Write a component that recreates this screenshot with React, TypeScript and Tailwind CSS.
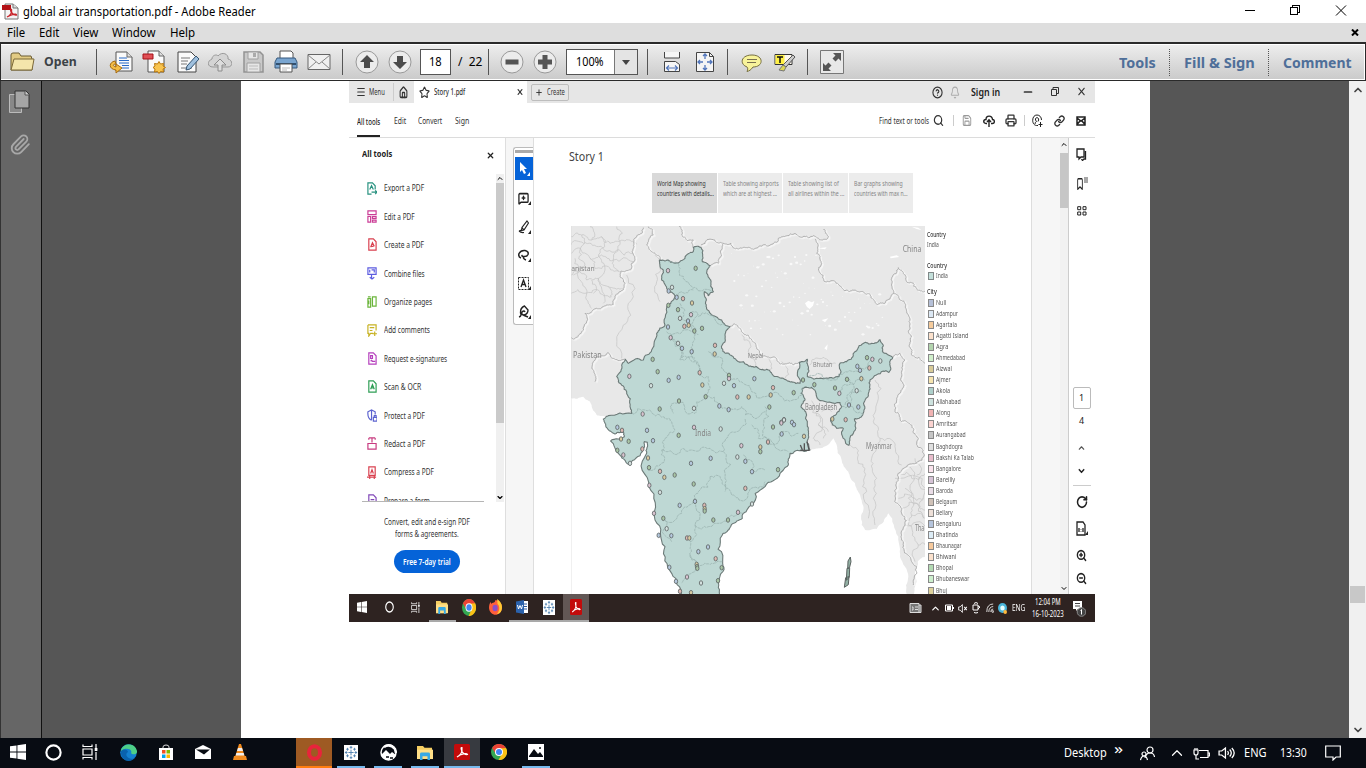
import { useLayoutEffect, useRef, useState } from 'react';
import type { ReactNode } from 'react';
import {
  Menu, House, Star, X, Plus, HelpCircle, Bell, Minus, Search, Save, Printer, Link,
  Bookmark, RotateCw, ZoomIn, ZoomOut, ChevronUp, ChevronDown, MessageSquarePlus,
  Paperclip,
} from 'lucide-react';

/* Single-line text squeezed or stretched to an exact width. */
function Fit({ w, className = '', children }: { w: number; className?: string; children: ReactNode }) {
  const ref = useRef<HTMLSpanElement>(null);
  const [s, setS] = useState(1);
  useLayoutEffect(() => {
    if (ref.current && ref.current.offsetWidth) setS(w / ref.current.offsetWidth);
  }, [w]);
  return (
    <span className={'block shrink-0 whitespace-nowrap ' + className} style={{ width: w }}>
      <span ref={ref} className="inline-block origin-left" style={{ transform: `scaleX(${s})` }}>{children}</span>
    </span>
  );
}

const none = { preserveAspectRatio: 'none' as const };

/* ---------- outer window ---------- */

function TitleBar() {
  return (
    <div className="flex h-[23px] items-center bg-white pl-[2px] text-[12px] text-black">
      <svg className="h-[17px] w-[17px]" viewBox="0 0 17 17">
        <path d="M3 1h8l5 4v11H3z" fill="#f4f4f4" stroke="#777" />
        <path d="M11 1v4h5" fill="#ddd" stroke="#777" />
        <path d="M0 2h9v5H0z" fill="#b31217" />
        <path d="M5 14c4-2 5-5 4.500-7.500c-1-1-1.500 1 0 3c1.500 2 3 3 5 2.500c0-1.500-5-1-9.500 2" fill="none" stroke="#c8262c" strokeWidth="1.300" />
      </svg>
      <Fit w={233} className="ml-[4px]">global air transportation.pdf - Adobe Reader</Fit>
      <svg className="mb-[3px] ml-auto mr-[18px] h-[12px] w-[103px]" viewBox="0 0 103 12" fill="none" stroke="#000">
        <path d="M0 6.500h10M45.500 3.500h7v7h-7zM47.500 3.500v-2h7v7h-2" shapeRendering="crispEdges" />
        <path d="M91 1.500l10 10M101 1.500l-10 10" />
      </svg>
    </div>
  );
}

function MenuBar() {
  return (
    <div className="flex h-[19px] items-center bg-[#dedede] pl-[7px] text-[12px] text-black">
      <Fit w={18}>File</Fit>
      <Fit w={20} className="ml-[14px]">Edit</Fit>
      <Fit w={25} className="ml-[14px]">View</Fit>
      <Fit w={44} className="ml-[14px]">Window</Fit>
      <Fit w={25} className="ml-[14px]">Help</Fit>
      <svg className="ml-auto mr-[7px] h-[7px] w-[8px]" viewBox="0 0 8 7"><path d="M1 .5l6 6M7 .5l-6 6" stroke="#000" strokeWidth="2" /></svg>
    </div>
  );
}

function Ico({ children, w = 'w-[33px]' }: { children: ReactNode; w?: string }) {
  return (
    <div className={'flex shrink-0 justify-center ' + w}>
      <svg className="h-[24px] w-[24px] shrink-0" viewBox="0 0 24 24" fill="none">{children}</svg>
    </div>
  );
}
const Sep = ({ className = '' }: { className?: string }) => <div className={'h-[26px] w-px shrink-0 bg-[#555] ' + className} />;
const Dotted = ({ className = '' }: { className?: string }) => <div className={'h-[27px] w-0 shrink-0 border-l border-dotted border-[#555] ' + className} />;
const Round = <circle cx="12" cy="12" r="11" fill="#ececec" stroke="#999" />;

function Toolbar() {
  return (
    <div className="flex h-[39px] items-center border-b border-l border-r border-t-2 border-[#2a2a2a] bg-linear-to-b from-[#eeeeee] to-[#cacaca]">
      <div className="flex h-[36px] w-full items-center border-y border-r border-white">
        <svg className="ml-[9px] h-[20px] w-[25px]" viewBox="0 0 25 20">
          <path d="M1 18V3q0-2 2-2h6l2 3h10l1 3v11z" fill="#e2cb84" stroke="#6b5c32" />
          <path d="M1 18L4 7h20l-2 11z" fill="#f4e5ab" stroke="#7b6838" />
        </svg>
        <Fit w={33} className="ml-[9px] text-[13px] font-bold text-[#3c4247]">Open</Fit>
        <Sep className="ml-[19px] mr-[7px]" />
        <Ico>
          <path d="M7 2h11l5 5v14H7z" fill="#fafafa" stroke="#555" /><path d="M18 2v5h5" fill="#ddd" stroke="#666" />
          <path d="M10 8h8M10 10.500h10M10 13h10M13 15.500h7M13 18h7" stroke="#2769c6" />
          <path d="M6 11c-6 1-7 8 1 9v3l6-5-6-4v3c-4-1-3-3 0-3z" fill="#f3bd45" stroke="#a66b10" />
        </Ico>
        <Ico>
          <path d="M6 1h11l5 5v16H6z" fill="#fafafa" stroke="#555" /><path d="M17 1v5h5" fill="#ddd" stroke="#666" />
          <path d="M1 4h10v5H1z" fill="#e04f55" stroke="#a5121b" />
          <path d="M17 11.500l1.500 2.500 3-.5-.5 2.500 2.500 1.500-2.500 1.500.5 3-3-.5-1.500 2-1.500-2-3 .500.500-3-2-1.500 2-1.500-.5-2.500 3 .5z" fill="#f8c44f" stroke="#b9770c" />
        </Ico>
        <Ico>
          <path d="M3 2h13l5 5v15H3z" fill="#fafafa" stroke="#444" /><path d="M6 8h9M6 11h7M6 14h6M6 18h11" stroke="#777" />
          <path d="M21 6l3 3-9 10-4 1 1-4z" fill="#9fc0de" stroke="#345472" />
        </Ico>
        <Ico>
          <path d="M5 17c-6 0-6-6-1-8 0-4 5-5 6-3 4-5 11-2 10 3 5 1 5 8 0 8z" fill="#d4d4d4" stroke="#999" />
          <path d="M12 9l6 6h-4v6h-4v-6H6z" fill="#ddd" stroke="#8c8c8c" />
        </Ico>
        <Ico>
          <path d="M3 2h16l3 3v17H3z" fill="#c9c9c9" stroke="#929292" strokeWidth="1.500" />
          <path d="M7 2h10v7H7zM6 13h13v9H6z" fill="#e6e6e6" stroke="#a0a0a0" /><path d="M12 3h3v4h-3z" fill="#aaa" />
          <path d="M8 16h9M8 19h9" stroke="#bbb" />
        </Ico>
        <Ico>
          <path d="M6 9V1h11l2 2v6" fill="#fff" stroke="#555" />
          <path d="M3 8h18l2 4v6H1v-6z" fill="#79a5d0" stroke="#36597c" /><path d="M2 13h20v2H2z" fill="#31506f" />
          <path d="M6 14h12v8H6z" fill="#fff" stroke="#555" /><path d="M8 18h8M8 20h5" stroke="#bbb" />
        </Ico>
        <Ico>
          <path d="M1 4.500h22v15H1z" fill="#f0f0f0" stroke="#666" /><path d="M1 5l11 9L23 5M1 19l8-7M23 19l-8-7" stroke="#888" />
        </Ico>
        <Sep className="ml-[7px] mr-[7px]" />
        <Ico>{Round}<path d="M12 5l7 7h-4v6H9v-6H5z" fill="#4c4c4c" /></Ico>
        <Ico>{Round}<path d="M12 19l7-7h-4V6H9v6H5z" fill="#4c4c4c" /></Ico>
        <div className="ml-[4px] flex h-[26px] w-[31px] shrink-0 items-center justify-center border border-[#555] bg-white text-[12px]"><Fit w={13}>18</Fit></div>
        <Fit w={24} className="ml-[7px] text-[12px]">/&nbsp; 22</Fit>
        <Sep className="ml-[6px] mr-[6px]" />
        <Ico>{Round}<path d="M5.500 9.500h13v5h-13z" fill="#555" /></Ico>
        <Ico>{Round}<path d="M9.500 5h5v4.500H19v5h-4.500V19h-5v-4.500H5v-5h4.500z" fill="#555" /></Ico>
        <div className="ml-[5px] flex h-[26px] w-[72px] shrink-0 items-center border border-[#555] bg-white text-[12px]">
          <Fit w={28} className="ml-[9px] mr-[10px]">100%</Fit>
          <div className="flex h-full flex-1 items-center justify-center border-l border-[#777] bg-[#e4e4e4]">
            <svg className="h-[5px] w-[8px]" viewBox="0 0 8 5"><path d="M0 0h8L4 5z" fill="#444" /></svg>
          </div>
        </div>
        <Sep className="ml-[9px] mr-[7px]" />
        <Ico>
          <path d="M4.500 2v6h15V2" fill="#f5f5f5" stroke="#444" /><path d="M4.500 11.500h11l4 3v7h-15z" fill="#f5f5f5" stroke="#444" />
          <path d="M6 18h12M9 15.500L6.500 18 9 20.500M15 15.500l2.500 2.500-2.500 2.500" stroke="#5276bb" strokeWidth="1.200" />
        </Ico>
        <Ico>
          <path d="M3.500 2.500h13l4 4v15h-17z" fill="#f5f5f5" stroke="#444" /><path d="M16.500 2.500v4h4" stroke="#444" />
          <path d="M12 4v5M12 15v5M5 12h5M14 12h5M10 6l2-2 2 2M10 18l2 2 2-2M7 10l-2 2 2 2M17 10l2 2-2 2" stroke="#5276bb" strokeWidth="1.300" />
        </Ico>
        <Sep className="ml-[6px] mr-[7px]" />
        <Ico>
          <path d="M12 5c12 0 12 12 1 12-2 3-4 4-6 4.500 1-2 1-3.500 0-4.500-8-3-6-12 5-12z" fill="#f8f39a" stroke="#766e40" /><path d="M7 9.500h10M7 12.500h9" stroke="#796f50" />
        </Ico>
        <Ico>
          <path d="M2 4.500h17v10H2z" fill="#fffaf0" stroke="#333" /><path d="M2.500 5h9v9h-9z" fill="#fff045" /><path d="M4 7h6M7 7v6" stroke="#111" strokeWidth="1.500" />
          <path d="M20 5l2 2-9 10-3-2z" fill="#ccc" stroke="#555" /><path d="M10 15l3 2-2 4-5-1z" fill="#dbd655" stroke="#777" />
        </Ico>
        <Sep className="ml-[6px] mr-[7px]" />
        <Ico>
          <path d="M.5.5h23v23H.5z" fill="#e8e8e8" stroke="#777" /><path d="M21 3v8l-2.500-2.500-3 3-3-3 3-3L13 3zM3 21v-8l2.500 2.500 3-3 3 3-3 3L11 21z" fill="#555" />
        </Ico>
        <div className="ml-auto flex items-center text-[14px] font-bold text-[#4f6f99]">
          <Fit w={37}>Tools</Fit><Dotted className="ml-[13px] mr-[14px]" />
          <Fit w={71}>Fill &amp; Sign</Fit><Dotted className="ml-[13px] mr-[14px]" />
          <Fit w={69} className="mr-[12px]">Comment</Fit>
        </div>
      </div>
    </div>
  );
}

/* ---------- embedded reader ---------- */

function ReaderTabs() {
  return (
    <div className="flex h-[22px] items-center bg-[#e6e6e6] text-[8px] text-[#333]">
      <Menu {...none} className="ml-[7px] h-[12px] w-[10px]" strokeWidth={2.2} />
      <Fit w={16} className="ml-[3px]">Menu</Fit>
      <div className="ml-[8px] h-[18px] w-px bg-[#ccc]" />
      <House {...none} className="ml-[5px] h-[13px] w-[9px]" strokeWidth={2.8} />
      <div className="ml-[6px] flex h-full w-[113px] items-center bg-white">
        <Star {...none} className="ml-[5px] h-[13px] w-[11px]" strokeWidth={2.2} />
        <Fit w={31} className="ml-[4px] text-[9.5px] font-medium">Story 1.pdf</Fit>
        <X {...none} className="ml-[51px] h-[10px] w-[8px]" strokeWidth={2.6} />
      </div>
      <div className="ml-[4px] flex h-[17px] w-[38px] items-center rounded-[2px] border border-[#bdbdbd]">
        <Plus {...none} className="ml-[3px] h-[9px] w-[8px]" strokeWidth={2.6} />
        <Fit w={18} className="ml-[4px]">Create</Fit>
      </div>
      <HelpCircle {...none} className="ml-auto h-[13px] w-[11px]" strokeWidth={2.4} />
      <Bell {...none} className="ml-[7px] h-[13px] w-[10px] text-[#aaa]" strokeWidth={2} />
      <Fit w={29} className="ml-[11px] text-[11px] font-semibold text-[#222]">Sign in</Fit>
      <Minus {...none} className="ml-[22px] h-[12px] w-[12px]" strokeWidth={3.4} />
      <svg className="mb-[2px] ml-[17px] h-[9px] w-[8px]" viewBox="0 0 8 9" fill="none" stroke="#333"><path d="M.5 2.500h5v6h-5zM2 2V.5h5.500v6H6" /></svg>
      <X {...none} className="mb-[2px] ml-[17px] mr-[8px] h-[13px] w-[11px]" strokeWidth={2} />
    </div>
  );
}

function ReaderMenu() {
  return (
    <div className="flex h-[35px] items-center border-b border-[#dcdcdc] pt-px text-[9px] text-[#333]">
      <div className="ml-[8px] flex h-full w-[23px] flex-col justify-end">
        <Fit w={23} className="mb-[7px] h-[12px] font-medium leading-[12px] text-[#222]">All tools</Fit>
        <div className="h-[2px] w-full bg-[#222]" />
      </div>
      <Fit w={12} className="ml-[14px]">Edit</Fit>
      <Fit w={24} className="ml-[12px]">Convert</Fit>
      <Fit w={14} className="ml-[13px]">Sign</Fit>
      <Fit w={50} className="ml-auto">Find text or tools</Fit>
      <Search {...none} className="ml-[4px] h-[13px] w-[11px]" strokeWidth={2.6} />
      <div className="ml-[9px] h-[11px] w-px bg-[#ccc]" />
      <Save {...none} className="ml-[8px] h-[13px] w-[10px] text-[#999]" strokeWidth={2.2} />
      <svg {...none} className="ml-[11px] h-[13px] w-[12px]" viewBox="0 0 12 13" fill="none" stroke="#222" strokeWidth="1.400"><path d="M4 9.500H3C0 9.500 0 5.500 3 5.500 3 1 9 1 9.500 5.500c2.500 0 2.500 4 0 4H8M6 13V6M4 8l2-2.300L8 8" /></svg>
      <Printer {...none} className="ml-[10px] h-[13px] w-[12px]" strokeWidth={2.6} />
      <div className="ml-[7px] h-[11px] w-px bg-[#ccc]" />
      <svg {...none} className="ml-[7px] h-[13px] w-[11px]" viewBox="0 0 11 13" fill="none" stroke="#222"><path d="M6 11.500C2 12 .7 9 .7 6.300.7 3 2.500 1 5 1s4.500 2 4.500 5M3 10q0-2 1.500-2.500Q3 6 3.500 4.500 5 2.500 6.500 4.500 7 6 6 7.500M8.500 8v5M6.500 10.500h4" /></svg>
      <Link {...none} className="ml-[11px] h-[12px] w-[11px]" strokeWidth={2.8} />
      <svg {...none} className="ml-[11px] mr-[9px] h-[10px] w-[10px]" viewBox="0 0 10 10" fill="none" stroke="#222" strokeWidth="1.500"><path d="M1 1h8v8H1zM1 2l4 3 4-3M1 8.500L4 5M9 8.500L6 5" /></svg>
    </div>
  );
}

const page = 'M2 1h5l3 3v9H2z';
const tools: { t: string; w: number; c: string; d: string }[] = [
  { t: 'Export a PDF', w: 40, c: 'text-[#27917f]', d: 'M5 13H1V1h5l3 3v4M3 8l2-4 2 4M5 11h6M9 9l2 2-2 2' },
  { t: 'Edit a PDF', w: 31, c: 'text-[#cb3d96]', d: 'M1 1h9v4H1zM1 7h3v6H1zM6 7h4v2H6zM6 11h4v2H6z' },
  { t: 'Create a PDF', w: 40, c: 'text-[#d9404f]', d: page + 'M4 10l2-5 2 4M4 9h3' },
  { t: 'Combine files', w: 41, c: 'text-[#5c5ce0]', d: 'M1 1h9v7H1zM3 3v3M5 3h3v3M5 8v5M3 11l2.500 2L8 11' },
  { t: 'Organize pages', w: 48, c: 'text-[#6bb53b]', d: 'M6 2h4v10H6zM1 4h3v9H1zM1 2h3M2 6v4' },
  { t: 'Add comments', w: 46, c: 'text-[#c7b222]', d: 'M1 1h9v6M7 10H4l-2 3V10H1V1M3 4h5M3 7h3M8.500 8v5M6 10.500h5' },
  { t: 'Request e-signatures', w: 63, c: 'text-[#b540bd]', d: page + 'M4 4h2v3H4zM4 10l1-1 1 1h3' },
  { t: 'Scan & OCR', w: 37, c: 'text-[#2f9e55]', d: page + 'M4 10l2-5 2 5M4.500 8.500h3' },
  { t: 'Protect a PDF', w: 41, c: 'text-[#5c63cf]', d: 'M5 12C0 10 1 5 1 3l4-2 4 2v3M5 1v11M7 9h4v4H7zM8 9V7h2v2' },
  { t: 'Redact a PDF', w: 41, c: 'text-[#c83b80]', d: 'M1 7h9v6H1zM2 1h7M5.500 1v5M2 1v2M9 1v2' },
  { t: 'Compress a PDF', w: 50, c: 'text-[#d9404f]', d: 'M2 1h7v9H2zM4 8l1.500-4L7 8M0 12h10M3 10v4M8 10v4' },
  { t: 'Prepare a form', w: 46, c: 'text-[#8148b8]', d: page + 'M4 6h4M4 9h4' },
];

function ToolsPanel() {
  return (
    <div className="flex w-[156px] shrink-0 flex-col bg-white">
      <div className="mb-[4px] flex h-[32px] shrink-0 items-center pl-[13px]">
        <Fit w={30} className="text-[9.5px] font-bold text-[#222]">All tools</Fit>
        <X {...none} className="ml-[94px] mt-[3px] h-[9px] w-[9px] text-[#222]" strokeWidth={3.2} />
      </div>
      <div className="flex h-[328px] shrink-0">
        <div className="h-[328px] w-[135px] pl-[13px]">
          <div className="h-full overflow-hidden border-b border-[#b5b5b5]">
            {tools.map((t) => (
              <div key={t.t} className="flex h-[28.400px] items-center pl-[5px] text-[9px] text-[#333]">
                <svg {...none} viewBox="0 0 11 14" className={'h-[13px] w-[10px] shrink-0 ' + t.c} fill="none" stroke="currentColor" strokeWidth="1.300"><path d={t.d} /></svg>
                <Fit w={t.w} className="ml-[7px]">{t.t}</Fit>
              </div>
            ))}
          </div>
        </div>
        <div className="ml-[12px] flex w-[8px] flex-col items-center justify-between bg-[#f0f0f0]">
          <ChevronUp className="h-[9px] w-[8px]" strokeWidth={3} />
          <div className="mb-auto h-[240px] w-full bg-[#cacaca]" />
          <ChevronDown className="h-[9px] w-[8px]" strokeWidth={3.5} />
        </div>
      </div>
      <div className="flex flex-col items-center pt-[14px] text-[9px] leading-[12px] text-[#333]">
        <Fit w={86}>Convert, edit and e-sign PDF</Fit>
        <Fit w={64}>forms &amp; agreements.</Fit>
        <div className="mt-[10px] flex h-[23px] w-[66px] items-center justify-center rounded-full bg-[#0563d8] text-white"><Fit w={48} className="font-semibold">Free 7-day trial</Fit></div>
      </div>
    </div>
  );
}

const Corner = () => <svg className="-ml-px mt-[10px] h-[4px] w-[3px] shrink-0" viewBox="0 0 3 4"><path d="M3 0v4H0z" fill="currentColor" /></svg>;

function QuickTools() {
  const row = 'flex h-[28.400px] w-full shrink-0 items-center justify-center text-[#222]';
  return (
    <div className="flex w-[29px] shrink-0 justify-end border-x border-[#dedede] bg-[#f6f6f6] pt-[9px]">
      <div className="flex h-[178px] w-[20px] flex-col items-center rounded-l-[3px] border border-r-0 border-[#bbb] bg-white pl-px pt-[2px]">
        <div className="h-[3px] w-full shrink-0 bg-[#aaa]" />
        <div className="mt-[4px] flex h-[23px] w-full shrink-0 items-center justify-center bg-[#0563d8] text-white">
          <svg className="h-[13px] w-[9px]" viewBox="0 0 9 13"><path d="M1 0v10l2-2 2 4 2-1-2-4h3z" fill="#fff" /></svg><Corner />
        </div>
        <div className={row + ' mt-[4px]'}><MessageSquarePlus {...none} className="h-[13px] w-[11px]" strokeWidth={2.8} /><Corner /></div>
        <div className={row}>
          <svg {...none} className="h-[14px] w-[11px]" viewBox="0 0 11 14" fill="none" stroke="currentColor" strokeWidth="1.200"><path d="M9 1l1.500 2L6 10l-2.500.5.5-3zM4 7.500L6 10M1 11q2 2 5 1.500M3.500 10L1 11" /></svg><Corner />
        </div>
        <div className={row}>
          <svg {...none} className="h-[12px] w-[11px]" viewBox="0 0 11 12" fill="none" stroke="currentColor" strokeWidth="1.500"><path d="M3 9Q0 8 1 4.500 3 1 7 1.500q4 1 3 4Q9 8 5 7.500 3 7 4.500 6M5.500 7.500Q5 10 8 11" /></svg><Corner />
        </div>
        <div className={row}>
          <svg className="h-[13px] w-[11px]" viewBox="0 0 11 13" fill="none" stroke="currentColor"><path d="M.5.5h10v12H.5z" strokeDasharray="2 1" /><path d="M3 10l2.500-7L8 10M4 7.500h3" strokeWidth="1.300" /></svg><Corner />
        </div>
        <div className={row}>
          <svg {...none} className="h-[14px] w-[11px]" viewBox="0 0 11 14" fill="none" stroke="currentColor" strokeWidth="1.400"><path d="M1 12q3-1 1.500-4Q2 3 6.500 1L10 5q0 4-4 5-3 0-2-3 2-2 3 0M5 10l5 2" /></svg><Corner />
        </div>
      </div>
    </div>
  );
}

/* ---------- map ---------- */

type P = [number, number];
const parse = (s: string): P[] => s.trim().split(/\s+/).map((p) => p.split(',').map(Number) as P);
/* Deterministic midpoint displacement, gives borders a natural ragged edge. */
function rough(s: string, amp = 0.16, closed = false, depth = 3) {
  let seed = 7 + s.length * 131;
  const rnd = () => { seed = (seed * 16807) % 2147483647; return seed / 2147483647 - 0.5; };
  let pts = parse(s);
  if (closed) pts.push(pts[0]);
  for (let k = 0; k < depth; k++) {
    const out: P[] = [pts[0]];
    for (let i = 1; i < pts.length; i++) {
      const [a, b] = pts[i - 1], [c, d] = pts[i];
      const r = rnd() * 2 * amp;
      out.push([(a + c) / 2 - (d - b) * r, (b + d) / 2 + (c - a) * r], [c, d]);
    }
    pts = out;
  }
  return 'M' + pts.map((p) => p[0].toFixed(1) + ' ' + p[1].toFixed(1)).join('L') + (closed ? 'Z' : '');
}

const india = '385,68 408,67 412,110 436,122 425,145 437,165 445,200 430,212 418,200 424,240 436,265 470,285 495,305 480,330 470,370 482,385 500,392 535,410 560,425 585,433 605,433 625,452 655,460 680,470 705,475 703,412 727,403 730,425 727,455 745,462 785,459 822,455 825,415 850,405 870,380 902,352 920,355 945,344 955,362 952,378 983,398 975,415 972,442 955,438 915,465 912,500 898,530 893,570 868,582 865,625 852,660 842,655 835,610 815,610 802,600 797,580 812,570 830,545 825,533 765,527 755,515 752,500 740,487 712,490 708,505 720,525 708,545 722,560 727,600 730,630 735,675 712,677 675,685 670,720 645,745 600,785 560,840 535,865 532,880 500,898 490,915 472,930 473,1015 463,1060 463,1115 348,1115 320,1045 300,965 270,885 252,785 245,685 247,652 238,650 232,680 195,718 160,685 137,648 150,642 178,635 176,622 150,627 122,600 115,582 130,572 200,565 195,545 185,500 160,470 155,455 170,420 182,403 190,415 235,405 260,375 275,325 300,300 312,240 330,217 305,190 290,165 295,135 285,120 283,105 310,105 325,113 360,100 385,80';
const land = '-300,-400 1500,-400 1500,1000 1080,995 1058,1010 1050,1040 1055,1070 1045,1110 1025,1107 1030,1055 1005,995 1000,935 970,865 960,880 935,912 900,915 890,900 895,855 885,810 870,775 850,740 830,705 815,660 805,640 765,670 735,677 600,600 300,500 200,560 115,573 95,570 75,530 55,515 18,520 -300,520';

const majorBorders = [
  '235,8 215,35 205,70 210,105 195,135 170,138 180,175 160,205 145,238 125,240 95,250 60,265 50,320 18,338',
  '250,5 265,30 245,60 270,85 285,105',
  '342,3 350,30 385,45 385,68', '408,60 450,45 475,55 470,90 460,115 436,122',
  '475,55 515,70 540,68 560,72 600,58 640,40 690,25 745,32 770,45 790,35 775,12',
  '750,42 755,85 760,135 780,170 830,188 880,200 915,208 935,238 975,222 985,205 980,160 1000,128 1015,145 1025,170 1055,190 1080,198',
  '985,205 1005,225 1025,260 1030,320 1033,365 1040,390 1080,415', '983,398 1005,385 1020,405 1018,480 995,520 990,560 1010,590 1040,600 1060,640 1078,690 1025,725 1000,745 990,800 1010,850 1020,900 1015,950 1040,1010 1045,1080',
  '495,305 515,300 535,325 560,345 575,370 605,395 640,410 670,415 703,412',
  '182,403 130,383 95,395 80,430 90,470',
];
const outerMinor = [
  '18,35 50,30 75,45 110,35 135,55 180,48 215,58', '18,85 48,75 75,100 110,90 145,105 205,110', '18,150 45,140 65,165 100,160 130,185 170,190',
  '50,30 45,75 60,120 40,160 65,205 80,250', '110,35 100,90 120,135 105,180 115,235', '155,5 165,50 145,105 160,140', '18,205 60,205 100,195 140,215',
  '18,60 55,55 100,65 155,75 205,85', '75,5 80,45', '75,100 90,130 130,125 170,138', '30,100 25,150', '80,165 85,205', '130,185 135,215',
  '185,150 190,235 175,300 170,400', '270,85 285,130 275,170 285,230',
  '425,300 430,310', '530,330 550,380 570,430', '605,395 610,440', '650,410 660,460',
  '735,420 760,400 790,408 812,415', '750,560 760,600 790,620', '740,527 745,640 765,660', '770,560 800,560', '760,600 775,640',
  '930,465 940,520 925,590 945,640 920,700 935,760 925,820 930,900', '850,660 880,690 900,730 905,800 910,880', '945,640 990,665 1010,720', '1000,745 1040,760 1080,745', '1010,850 1060,840 1080,855', '1020,790 1040,850 1030,900 1060,960 1050,1010', '1060,760 1065,830 1080,880', '990,760 1080,790', '1020,900 1080,915', '1060,960 1080,960', '1025,725 1035,790 1030,820 1060,840', '1050,700 1055,750', '1000,820 1040,815 1075,820', '1040,870 1075,880',
];
const states = [
  '310,110 345,130 360,165 395,190 440,198', '330,217 360,205 385,195', '345,235 350,280 380,310 400,330', '305,320 320,340 345,360 350,400 390,410 400,440 430,455 435,490 425,515 395,530 390,565 360,555 345,530 315,545 325,565',
  '380,260 400,270 390,330 385,380 405,440', '400,275 430,268 450,285 480,300', '430,380 470,430 495,460 535,475 560,500 600,515 650,515 700,520 712,490',
  '425,515 460,535 490,555 530,545 540,570 600,560', '600,545 595,600 610,660 640,650 660,620 700,625', '322,345 345,405 390,400', '200,565 240,555 285,570 310,580 330,615 300,640 290,675 340,685 380,675 435,670 475,680 490,630 525,615 540,580',
  '475,680 480,760 500,810 540,825 580,790 600,770', '290,675 285,720 250,735', '435,755 400,800 385,830 350,865 300,885 320,950', '435,755 470,765 480,800', '385,830 390,900 430,905 500,870 535,865',
  '390,900 375,950 375,990 400,1020 440,1015 473,1010', '375,990 390,1040 350,1075', '320,345 330,325 380,320', '560,600 580,640 620,650 670,680', '535,690 560,740 600,735',
  '730,455 780,460 840,440 890,430 930,400', '825,500 850,480 900,465', '840,540 875,500 890,500', '830,545 870,560 893,570', '850,460 860,500 850,540',
];
const c = ['#a9c6a5', '#d8caa0', '#dfb8b2', '#b5c8de', '#d3e0de', '#d9c3d0'];
const dots = parse('392,130 309,137 321,187 311,198 335,217 354,221 381,234 310,241 339,254 378,269 345,280 369,288 309,306 358,304 371,301 388,318 411,310 317,338 339,355 351,370 380,380 450,361 449,387 263,403 278,440 193,454 258,482 311,466 341,457 404,443 412,480 422,515 492,451 492,461 477,475 507,482 568,461 517,516 551,516 342,528 284,552 233,567 387,550 463,543 491,554 624,488 617,510 686,503 613,546 657,584 649,592 681,592 157,607 171,616 168,642 191,649 157,676 175,690 195,715 246,616 264,647 232,672 249,699 252,728 341,631 387,607 467,612 378,715 437,700 285,739 298,757 329,750 386,777 253,781 285,802 344,841 390,829 418,841 419,851 419,858 295,880 267,865 305,911 319,932 281,931 366,939 373,939 445,885 489,885 519,862 561,837 429,966 400,980 452,1001 395,1018 396,1025 397,1030 366,1056 408,1074 313,1027 333,1069 345,1099 378,1103 470,1028 459,1067 529,662 517,696 541,709 561,740 541,790 586,666 586,680 624,606 649,594 657,585 687,599 650,627 609,651 717,634 639,734 906,398 922,403 946,408 877,424 885,436 913,429 889,461 846,463 810,489 823,505 875,497 852,540 880,546 842,584 802,582 748,479 714,465');
const specks = Array.from({ length: 120 }, (_, i) => [500 + ((i * 137) % 465), 85 + ((i * 71 + ((i * i) % 37)) % 260), 1.5 + (i % 4)]);

function MapView() {
  return (
    <svg className="h-[368px] w-[354px] shrink-0" viewBox="18 3 1062 1104" fill="none" fontFamily="Noto Sans, sans-serif">
      <path d="M18 3h1062v1104H18z" fill="#fff" />
      <path d={rough(land, 0.12, true)} fill="#e8e8e8" />
      {specks.filter(([x, y]) => y < 330 && (x > 520 || y < 260) && (x < 760 || y > 200)).map(([x, y, r], i) => <ellipse key={i} cx={x} cy={y} rx={r} ry={r * 0.8} fill="#fff" opacity="0.75" />)}
      <path d="M720 235l10-8 10 5 8-4-4 14-10 10-8-6zM770 285l20-5-10 12zM760 70l25-3-5 6zM975 95l20-4 8 5-26 4zM778 370l10-12-2 18zM1040 5l20 3 10 8-15-4z" fill="#fff" />
      <g stroke="#c3c3c3" strokeWidth="2">{outerMinor.map((b) => <path key={b} d={rough(b, 0.28)} />)}</g>
      <g stroke="#fff" strokeWidth="5" opacity=".6">{majorBorders.map((b) => <path key={b} d={rough(b, 0.22, false, 4)} transform="translate(4 3)" />)}</g>
      <g stroke="#a3a3a3" strokeWidth="2.500">{majorBorders.map((b) => <path key={b} d={rough(b, 0.22, false, 4)} />)}</g>
      <path d={rough(india, 0.18, true)} fill="#bed8d4" stroke="#6c7a78" strokeWidth="3.300" strokeLinejoin="round" />
      <g stroke="#96aeaa" strokeWidth="2" strokeDasharray="9 2">{states.map((b) => <path key={b} d={rough(b, 0.28)} />)}</g>
      <path d="M849 1008l7-12 2 14-4 16-6 6zM846 1030l8-2-1 28-9 10zM842 1058l10-3-2 24-12 8z" fill="#93b1a5" stroke="#59615f" strokeWidth="3" />
      <path d="M706 660l6 14M718 655v20M726 650l6 24M706 676h28" stroke="#555" strokeWidth="4" />
      <g stroke="#626a69" strokeWidth="2.600">
        {dots.map(([x, y], i) => <ellipse key={i} cx={x} cy={y} rx="5" ry="6.800" fill={c[(i * 5 + (i >> 2)) % 6]} />)}
      </g>
      <g fill="#858585" fontSize="24">
        <text x="19" y="137" fontSize="21" textLength="70" lengthAdjust="spacingAndGlyphs">anistan</text>
        <text x="24" y="398" fontSize="26" textLength="86" lengthAdjust="spacingAndGlyphs">Pakistan</text>
        <text x="548" y="398" fontSize="23" textLength="47" lengthAdjust="spacingAndGlyphs">Nepal</text>
        <text x="744" y="427" fontSize="23" textLength="58" lengthAdjust="spacingAndGlyphs">Bhutan</text>
        <text x="720" y="554" textLength="96" lengthAdjust="spacingAndGlyphs">Bangladesh</text>
        <text x="1013" y="82" fontSize="29" textLength="56" lengthAdjust="spacingAndGlyphs">China</text>
        <text x="390" y="632" fontSize="26" textLength="48" lengthAdjust="spacingAndGlyphs">India</text>
        <text x="903" y="671" fontSize="26" textLength="78" lengthAdjust="spacingAndGlyphs">Myanmar</text>
        <text x="1050" y="918" textLength="28" lengthAdjust="spacingAndGlyphs">Tha</text>
      </g>
      <path d="M18.500 3v1104" stroke="#ddd" strokeWidth="2" />
    </svg>
  );
}

const cities: [string, number, string][] = [
  ['Null', 10, 'bg-[#b5c0d8]'], ['Adampur', 22, 'bg-[#dce8f4]'], ['Agartala', 21, 'bg-[#f5cb9c]'], ['Agatti Island', 32, 'bg-[#fbe1cc]'],
  ['Agra', 12, 'bg-[#b3d4ae]'], ['Ahmedabad', 29, 'bg-[#d0efcb]'], ['Aizwal', 16, 'bg-[#d8cb98]'], ['Ajmer', 15, 'bg-[#f7e5b0]'],
  ['Akola', 14, 'bg-[#aed0cb]'], ['Allahabad', 25, 'bg-[#cde2de]'], ['Along', 14, 'bg-[#f1b3b3]'], ['Amritsar', 21, 'bg-[#fbd3d0]'],
  ['Aurangabad', 30, 'bg-[#c6c6c6]'], ['Baghdogra', 27, 'bg-[#e0e0e0]'], ['Bakshi Ka Talab', 38, 'bg-[#e8bccb]'], ['Bangalore', 25, 'bg-[#fae3ec]'],
  ['Bareilly', 19, 'bg-[#d6c3d6]'], ['Baroda', 17, 'bg-[#eadde7]'], ['Belgaum', 21, 'bg-[#d0c2b8]'], ['Bellary', 17, 'bg-[#eee0d8]'],
  ['Bengaluru', 25, 'bg-[#b5c4dc]'], ['Bhatinda', 22, 'bg-[#dcecf6]'], ['Bhaunagar', 26, 'bg-[#f6c99c]'], ['Bhiwani', 20, 'bg-[#fbe1cc]'],
  ['Bhopal', 17, 'bg-[#b3dab3]'], ['Bhubaneswar', 33, 'bg-[#cdefcd]'], ['Bhuj', 11, 'bg-[#dfd29c]'],
];

function Legend() {
  return (
    <div className="h-[368px] w-[60px] overflow-hidden pl-[2px] pt-[4px] text-[7px] leading-[10px] text-[#555]">
      <Fit w={19} className="font-medium text-[#333]">Country</Fit>
      <Fit w={12}>India</Fit>
      <Fit w={20} className="mt-[11px] font-medium text-[#333]">Country</Fit>
      <div className="flex h-[10px] items-center"><div className="ml-px h-[8px] w-[6px] border border-[#808888] bg-[#c3dfda]" /><Fit w={12} className="ml-[2px]">India</Fit></div>
      <Fit w={10} className="mt-[6px] font-medium text-[#333]">City</Fit>
      {cities.map(([n, w, col]) => (
        <div key={n} className="flex h-[11.080px] items-center">
          <div className={'ml-px h-[8px] w-[6px] shrink-0 border border-[#888] ' + col} />
          <Fit w={w} className="ml-[2px]">{n}</Fit>
        </div>
      ))}
    </div>
  );
}

const story: [string, number, string, number][] = [
  ['World Map showing', 49, 'countries with details...', 57], ['Table showing airports', 56, 'which are at highest ...', 54],
  ['Table showing list of', 51, 'all airlines within the ...', 56], ['Bar graphs showing', 49, 'countries with max n...', 54],
];

function Sheet() {
  return (
    <div className="h-[456px] w-[497px] shrink-0 bg-white">
      <div className="flex h-[35px] items-center pl-[35px] pt-[4px]"><Fit w={35} className="text-[12.500px] text-[#444]">Story 1</Fit></div>
      <div className="ml-[118px] flex h-[40px] gap-px">
        {story.map(([a, aw, b, bw], i) => (
          <div key={a} className={'w-[64.500px] pl-[5px] pt-[6px] text-[7px] leading-[10px] ' + (i ? 'bg-[#ececec] text-[#848484]' : 'bg-[#d9d9d9] text-[#333]')}>
            <Fit w={aw}>{a}</Fit><Fit w={bw}>{b}</Fit>
          </div>
        ))}
      </div>
      <div className="flex pl-[37px] pt-[13px]"><MapView /><Legend /></div>
    </div>
  );
}

function RightRail() {
  const k = { ...none, strokeWidth: 2.6 };
  return (
    <div className="flex w-[26px] shrink-0 flex-col items-center bg-white pr-px text-[9px] text-[#222]">
      <svg {...none} className="mt-[10px] h-[13px] w-[11px]" viewBox="0 0 11 13" fill="none" stroke="#222" strokeWidth="1.300"><path d="M1 1h7v8H5L3 11V9H1zM9.500 3v8H8l-1.500 1.500L5.500 11" /></svg>
      <div className="mt-[16px] flex"><Bookmark {...k} className="h-[14px] w-[8px]" /><svg className="h-[6px] w-[4px]" viewBox="0 0 4 6" stroke="#222"><path d="M0 1h4M0 3h4M0 5h4" strokeWidth=".8" /></svg></div>
      <svg className="mt-[15px] h-[10px] w-[10px]" viewBox="0 0 10 10" fill="none" stroke="#222"><path d="M.7.700h3v3h-3zM6 .7h3v3H6zM.7 6h3v3h-3zM6 6h3v3H6z" /></svg>
      <div className="mt-[171px] flex h-[22px] w-[18px] shrink-0 items-center justify-center rounded-[2px] border border-[#bbb]">1</div>
      <div className="mt-[5px] h-[13px] leading-[13px]">4</div>
      <ChevronUp {...none} className="mt-[16px] h-[10px] w-[9px] text-[#555]" strokeWidth={2.8} />
      <ChevronDown {...none} className="mt-[13px] h-[10px] w-[9px]" strokeWidth={4} />
      <div className="mt-[9px] h-px w-[18px] shrink-0 bg-[#ccc]" />
      <RotateCw {...k} className="mt-[9px] h-[14px] w-[12px]" strokeWidth={3} />
      <div className="mt-[12px] flex">
        <svg {...none} className="h-[15px] w-[10px]" viewBox="0 0 10 15" fill="none" stroke="#222" strokeWidth="1.300"><path d="M1 1h6l2 3v10H1zM3 7v4M7 7v4M5 8v.5M5 10v.5" /></svg><Corner />
      </div>
      <ZoomIn {...k} className="mt-[13px] h-[13px] w-[11px]" strokeWidth={3} />
      <ZoomOut {...k} className="mt-[10px] h-[13px] w-[11px]" strokeWidth={3} />
    </div>
  );
}

/* ---------- taskbar glyphs ---------- */

const Win = ({ className }: { className: string }) => <svg {...none} className={className} viewBox="0 0 16 16" fill="#fff"><path d="M0 2.300l6.500-.9V7.600H0zM7.400 1.200L16 0v7.600H7.400zM0 8.400h6.500v6.200L0 13.700zM7.400 8.400H16V16l-8.600-1.200z" /></svg>;
const Ring = ({ className }: { className: string }) => <svg {...none} className={className} viewBox="0 0 16 16"><circle cx="8" cy="8" r="6.700" fill="none" stroke="#fff" strokeWidth="2" /></svg>;
const TaskView = ({ className }: { className: string }) => <svg {...none} className={className} viewBox="0 0 16 16" fill="none" stroke="#fff" strokeWidth="1.200"><path d="M1 .5v2h9v-2M1 5h9v6H1zM1 15.500v-2h9v2M14 0v4M14 8v8" /><path d="M13.300 4.500h1.500v2h-1.500z" fill="#fff" /></svg>;
const Chrome = ({ className }: { className: string }) => (
  <svg {...none} className={className} viewBox="0 0 16 16">
    <circle cx="8" cy="8" r="8" fill="#34a853" /><path d="M1 4a8 8 0 0 1 14 0v1H8L5 10z" fill="#ea4335" /><path d="M15 4a8 8 0 0 1-7.500 12L11.500 9 8 4.500z" fill="#fbc116" />
    <circle cx="8" cy="8" r="4" fill="#fff" /><circle cx="8" cy="8" r="3" fill="#4285f4" />
  </svg>
);
const Folder = ({ className }: { className: string }) => <svg {...none} className={className} viewBox="0 0 16 16"><path d="M0 1h6l1.500 2H15v12H0z" fill="#f5ce62" /><path d="M0 5h16v10H0z" fill="#ffdf87" /><path d="M3 16V9.500Q3 8 4.500 8h7Q13 8 13 9.500V16h-2.500v-4h-5v4z" fill="#38a9e4" /></svg>;
const Acro = ({ className }: { className: string }) => <svg {...none} className={className} viewBox="0 0 16 16"><rect width="16" height="16" rx="1.500" fill="#c30b0b" /><path d="M3 13c4-2 5.500-6 5-9.500-1.500-.5-1 2 0 4C9.500 10 11 11 13.500 10.500 13 9 7 9.500 3 13z" fill="none" stroke="#fff" strokeWidth="1.100" /></svg>;
const Tableau = ({ className }: { className: string }) => <svg {...none} className={className} viewBox="0 0 16 16"><path d="M0 0h16v16H0z" fill="#fff" /><path d="M8 5v6M5 8h6M8 1v3M6.500 2.500h3M8 12v3M6.500 13.500h3M1 8h3M2.500 6.500v3M12 8h3M13.500 6.500v3M4 3v3M2.500 4.500h3M12 3v3M10.500 4.500h3M4 10v3M2.500 11.500h3M12 10v3M10.500 11.500h3" stroke="#4c7fae" /></svg>;
const Speaker = ({ className, mute }: { className: string; mute?: boolean }) => <svg {...none} className={className} viewBox="0 0 16 14" fill="none" stroke="#fff" strokeWidth="1.200"><path d="M1 5h2.500L7 2v10L3.500 9H1z" />{mute ? <path d="M10 5l4 4M14 5l-4 4" strokeWidth="1.600" /> : <path d="M9 5q1.500 2 0 4M11 3.500q3 3.500 0 7M13 2q4.500 5 0 10" />}</svg>;

function InnerTaskbar() {
  const cell = 'flex h-full w-[26.700px] shrink-0 items-center justify-center border-b-2 ';
  const off = cell + 'border-transparent', on = cell + 'border-[#a9a9a9]';
  return (
    <div className="flex h-[28px] items-center bg-[#2e2321] text-[8px] text-white">
      <div className={off}><Win className="h-[12px] w-[10px]" /></div>
      <div className={off}><Ring className="h-[12px] w-[9px]" /></div>
      <div className={off}><TaskView className="h-[11px] w-[9px]" /></div>
      <div className={on}><Folder className="h-[14px] w-[12px]" /></div>
      <div className={off}><Chrome className="h-[17px] w-[14px]" /></div>
      <div className={off}>
        <svg {...none} className="h-[16px] w-[13px]" viewBox="0 0 16 16"><path d="M8 1c6 1 8 4 8 8-1 9-15 9-16 0 0-3 1-5 2-6l1 2c1-2 3-1 4-2z" fill="#ff5f3b" /><path d="M10 0c5 3 7 6 5.500 11-1 3-4 4-6 4 4-3 4-8 1-10z" fill="#ffc933" /><circle cx="7.500" cy="9" r="3.200" fill="#8a4fc8" /></svg>
      </div>
      <div className={on}>
        <svg {...none} className="h-[14px] w-[12px]" viewBox="0 0 12 14"><path d="M5 1h7v12H5z" fill="#fff" /><path d="M7 4h4M7 6.500h4M7 9h4" stroke="#2b579a" /><path d="M0 1.500L8 0v14l-8-1.500z" fill="#2b62ac" /><path d="M1.500 5l1 4L4 5.500 5.500 9l1-4" fill="none" stroke="#fff" /></svg>
      </div>
      <div className={on}><Tableau className="h-[15px] w-[12px]" /></div>
      <div className={on + ' bg-[#625755]'}><Acro className="h-[16px] w-[12px]" /></div>
      <svg {...none} className="ml-auto h-[12px] w-[13px]" viewBox="0 0 13 12" fill="none" stroke="#ddd"><path d="M1 1.500h9v9H1zM10 3h2v7.500h-2" fill="#777" /><path d="M3 5h1v3H3M6 5h3M6 7.500h3" /></svg>
      <ChevronUp {...none} className="ml-[8px] h-[11px] w-[11px]" strokeWidth={2.6} />
      <svg {...none} className="ml-[4px] h-[8px] w-[9px]" viewBox="0 0 9 8"><path d="M.5 1h7v6h-7z" fill="none" stroke="#fff" /><path d="M2 2h4v4H2zM8 3h1v2H8z" fill="#fff" /></svg>
      <Speaker mute className="ml-[4px] h-[11px] w-[10px]" />
      <svg {...none} className="ml-[4px] h-[12px] w-[8px]" viewBox="0 0 8 12" fill="none" stroke="#fff"><path d="M1 3h5v5H1zM2 1.500Q4-.5 6 1.500M2 10.500q2 1 4 0M6 4l2 1-2 2" /></svg>
      <svg {...none} className="ml-[6px] h-[10px] w-[8px]" viewBox="0 0 10 10" fill="none" stroke="#fff" strokeWidth=".9"><path d="M1 9Q1 1 9 1M3.500 9q0-5 5.500-5.500M6 9q0-3 3-3" /><circle cx="8.500" cy="8.500" r="1" /></svg>
      <svg {...none} className="ml-[4px] h-[11px] w-[9px]" viewBox="0 0 10 11"><circle cx="5" cy="5" r="5" fill="#49b6db" /><circle cx="5" cy="5" r="2.500" fill="#e6ffff" /><circle cx="8" cy="9" r="2" fill="#ffb83a" /></svg>
      <Fit w={13} className="ml-[5px]">ENG</Fit>
      <div className="ml-[7px] flex w-[32px] flex-col items-center leading-[12px]"><Fit w={26}>12:04 PM</Fit><Fit w={32}>16-10-2023</Fit></div>
      <svg {...none} className="ml-[8px] mr-[9px] h-[17px] w-[14px]" viewBox="0 0 14 17"><path d="M1 1h9v8H6l-2 2v-2H1z" fill="#fff" /><path d="M3 3.500h5M3 6h5" stroke="#444" /><circle cx="9.500" cy="12" r="4.300" fill="#444" stroke="#888" /><path d="M9.500 9.500v5M8.500 10.500l1-1" stroke="#fff" /></svg>
    </div>
  );
}

function Reader() {
  return (
    <div className="ml-[108px] flex h-[541px] w-[746px] flex-col overflow-hidden bg-white">
      <ReaderTabs />
      <ReaderMenu />
      <div className="flex h-[456px] shrink-0">
        <ToolsPanel />
        <QuickTools />
        <Sheet />
        <div className="w-[29px] shrink-0 border-l border-[#ddd] bg-[#f6f6f6]" />
        <div className="flex w-[9px] shrink-0 flex-col items-center border-r border-[#ccc] bg-[#f1f1f1]">
          <ChevronUp className="mt-[2px] h-[9px] w-[8px]" strokeWidth={3} />
          <div className="mt-[4px] h-[55px] w-full bg-[#c6c6c6]" />
          <ChevronDown className="mb-px mt-auto h-[9px] w-[8px]" strokeWidth={3} />
        </div>
        <RightRail />
      </div>
      <InnerTaskbar />
    </div>
  );
}

function Taskbar() {
  const cell = 'flex h-full shrink-0 items-center justify-center border-b-2 ';
  const off = cell + 'w-[37px] border-transparent', on = cell + 'border-[#76b9ed] ';
  return (
    <div className="flex h-[30px] items-center bg-[#080c13] text-[12px] text-white">
      <div className={off + ' -ml-px'}><Win className="h-[16px] w-[16px]" /></div>
      <div className={off + ' -ml-px'}><Ring className="h-[17px] w-[17px]" /></div>
      <div className={off + ' -ml-px'}><TaskView className="h-[16px] w-[16px]" /></div>
      <div className={off + ' ml-[2px]'}>
        <svg className="h-[17px] w-[17px]" viewBox="0 0 17 17"><circle cx="8.500" cy="8.500" r="8.300" fill="#1480d0" /><path d="M1 6C3-1 15-2 17 7c.5 4-5 4-6 2 1-1 0-4-3-4-4-1-7 2-7 4z" fill="#4dcf87" /><path d="M1 7c3-3 7-1 7 1-2 1-3 5 2 6.500 2 .6 4 0 5-1-3 5-13 5-14-4z" fill="#0962ae" /></svg>
      </div>
      <div className={off}>
        <svg className="h-[17px] w-[16px]" viewBox="0 0 16 17"><path d="M5 5V3q0-2 3-2t3 2v2" fill="none" stroke="#ddd" /><path d="M1 4h14v12H1z" fill="#fff" /><path d="M4 6h3.500v3.500H4z" fill="#f25022" /><path d="M8.500 6H12v3.500H8.500z" fill="#7fba00" /><path d="M4 10.500h3.500V14H4z" fill="#00a4ef" /><path d="M8.500 10.500H12V14H8.500z" fill="#ffb900" /></svg>
      </div>
      <div className={off}><svg className="h-[14px] w-[16px]" viewBox="0 0 16 14"><path d="M0 4l8-4 8 4v10H0z" fill="#fff" /><path d="M1 4.500h14L9 9.500z" fill="#080c13" /></svg></div>
      <div className={off}>
        <svg className="h-[17px] w-[14px]" viewBox="0 0 14 17"><path d="M6 0h2l4 13H2z" fill="#f28b1d" /><path d="M5 4h4l1 3H4zM3.300 9h7.400l.6 2.500H2.700z" fill="#eee" /><path d="M1 12h12l1 4H0z" fill="#f18c20" /></svg>
      </div>
      <div className="ml-[38px] flex h-full w-[36px] shrink-0 items-center justify-center border-b-2 border-[#ff7d10] bg-[#9e5a23]"><svg className="h-[17px] w-[17px]" viewBox="0 0 17 17"><ellipse cx="8.500" cy="8.500" rx="5.500" ry="6.300" fill="none" stroke="#e8243b" strokeWidth="4" /></svg></div>
      <div className={on + 'ml-[5px] w-[28px]'}><Tableau className="h-[15px] w-[14px]" /></div>
      <div className={on + 'ml-[9px] w-[28px]'}>
        <svg className="h-[17px] w-[17px]" viewBox="0 0 17 17"><circle cx="8.500" cy="8.500" r="7.500" fill="#080c13" stroke="#fff" strokeWidth="1.500" /><path d="M1 11l5-5 4 4 2-2 4 3q-2 5-7 5-6 0-8-5z" fill="#fff" /><path d="M4 3q6-4 11 2l1 4" fill="none" stroke="#fff" strokeWidth="2.500" /><path d="M6 13h3M10 14h3" stroke="#080c13" strokeWidth="1.500" /></svg>
      </div>
      <div className={on + 'ml-[9px] w-[28px]'}><Folder className="h-[15px] w-[16px]" /></div>
      <div className={on + 'ml-[5px] w-[36px] bg-[#373a40]'}><Acro className="h-[16px] w-[16px]" /></div>
      <div className={off}><Chrome className="h-[16px] w-[16px]" /></div>
      <div className={on + 'ml-[5px] w-[28px]'}><svg className="h-[16px] w-[16px]" viewBox="0 0 16 16"><path d="M0 0h16v16H0z" fill="#fff" /><path d="M1 12l5-7 4 5 2-2 3 4v1H1z" fill="#080c13" /><circle cx="12" cy="4" r="1" fill="#080c13" /></svg></div>
      <Fit w={43} className="ml-auto">Desktop</Fit>
      <Fit w={9} className="mb-[10px] ml-[7px] text-[14px]">»</Fit>
      <svg className="ml-[17px] h-[15px] w-[15px]" viewBox="0 0 15 15" fill="none" stroke="#fff" strokeWidth="1.200"><circle cx="10" cy="4" r="3" /><path d="M5 12q1-5 5-5t4.500 4" /><circle cx="4" cy="8" r="2" /><path d="M.5 14q1-4 3.500-4t3.500 4" /></svg>
      <ChevronUp {...none} className="ml-[13px] h-[18px] w-[18px]" strokeWidth={1.6} />
      <svg className="ml-[7px] h-[13px] w-[17px]" viewBox="0 0 17 13" fill="none" stroke="#fff" strokeWidth="1.200"><path d="M6 3.500h9v7H7M15 6h1.500v3H15M1 3v3q0 2 2 2t2-2V3zM2 1v2M4 1v2M3 8v4h3" /></svg>
      <Speaker className="ml-[8px] h-[14px] w-[17px]" />
      <Fit w={23} className="ml-[9px]">ENG</Fit>
      <Fit w={27} className="ml-[13px]">13:30</Fit>
      <svg className="ml-[18px] mr-[25px] h-[16px] w-[16px]" viewBox="0 0 16 16" fill="none" stroke="#fff" strokeWidth="1.200"><path d="M.7 1h14.600v11H11l-3 3v-3H.7z" /></svg>
    </div>
  );
}

export default function App() {
  return (
    <div className="h-[768px] w-[1366px] overflow-hidden font-['Noto_Sans',sans-serif]">
      <TitleBar />
      <MenuBar />
      <Toolbar />
      <div className="flex h-[657px]">
        <div className="flex w-[42px] shrink-0 flex-col items-center border-l border-r border-l-[#333] border-r-[#111] bg-[#666] pr-[3px] pt-[9px]">
          <svg className="h-[23px] w-[21px]" viewBox="0 0 21 23"><path d="M.5 4.500h12v18H.5z" fill="#888" stroke="#bbb" /><path d="M6 1h11l3 3v14H6z" fill="#a5a5a5" stroke="#333" /><path d="M16 1v4h4" fill="#ccc" stroke="#555" /></svg>
          <Paperclip className="mt-[20px] h-[23px] w-[22px] text-[#a8a8a8]" strokeWidth={2} />
        </div>
        <div className="w-[199px] shrink-0 bg-[#565656]" />
        <div className="w-[909px] shrink-0 bg-white"><Reader /></div>
        <div className="w-[199px] shrink-0 bg-[#565656]" />
        <div className="flex flex-1 flex-col items-center bg-[#f0f0f0] text-[#444]">
          <ChevronUp className="mt-[3px] h-[12px] w-[12px]" strokeWidth={3.5} />
          <div className="mt-[490px] h-[17px] w-[15px] bg-[#c8c8c8]" />
          <ChevronDown className="mb-[2px] mt-auto h-[12px] w-[12px]" strokeWidth={3.5} />
        </div>
      </div>
      <Taskbar />
    </div>
  );
}
